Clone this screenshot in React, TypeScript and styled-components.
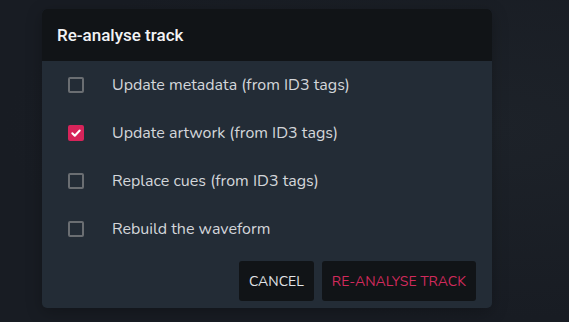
import { useState } from "react";
import styled, { createGlobalStyle } from "styled-components";

const GlobalStyle = createGlobalStyle`
  html, body {
    margin: 0;
    padding: 0;
    background: #1a1f26;
  }
  body {
    font-family: "Nunito", "Open Sans", sans-serif;
  }
`;

const options = [
  "Update metadata (from ID3 tags)",
  "Update artwork (from ID3 tags)",
  "Replace cues (from ID3 tags)",
  "Rebuild the waveform",
];

export default function App(): JSX.Element {
  const [checked, setChecked] = useState<boolean[]>([false, true, false, false]);

  const toggle = (index: number) => {
    setChecked((prev) => prev.map((value, i) => (i === index ? !value : value)));
  };

  return (
    <>
      <GlobalStyle />
      <Backdrop>
        <Dialog>
          <Header>Re-analyse track</Header>
          <Body>
            {options.map((label, index) => (
              <Row key={label} onClick={() => toggle(index)}>
                <Box checked={checked[index]}>
                  {checked[index] && (
                    <svg width="12" height="12" viewBox="0 0 12 12" fill="none">
                      <path
                        d="M2.3 6.2l2.5 2.5 4.9-5.2"
                        stroke="#ffffff"
                        strokeWidth="2"
                        strokeLinecap="round"
                        strokeLinejoin="round"
                      />
                    </svg>
                  )}
                </Box>
                <Label>{label}</Label>
              </Row>
            ))}
            <Actions>
              <ActionButton>CANCEL</ActionButton>
              <ActionButton primary>RE-ANALYSE TRACK</ActionButton>
            </Actions>
          </Body>
        </Dialog>
      </Backdrop>
    </>
  );
}

const Backdrop = styled.div`
  width: 569px;
  height: 322px;
  box-sizing: border-box;
  padding: 9px 0 0 42px;
  background: radial-gradient(ellipse at 85% 40%, #1d2229 0%, #181c23 70%);
  overflow: hidden;
`;

const Dialog = styled.div`
  width: 450px;
  border-radius: 5px;
  overflow: hidden;
  background: #232c36;
  box-shadow: 0 4px 16px rgba(0, 0, 0, 0.25);
`;

const Header = styled.div`
  height: 52px;
  display: flex;
  align-items: center;
  padding: 0 15px;
  background: #111417;
  color: #f2f3f5;
  font-family: "Roboto", "Liberation Sans", sans-serif;
  font-weight: 500;
  font-size: 17px;
`;

const Body = styled.div`
  display: flex;
  flex-direction: column;
  padding: 0 16px 7px 26px;
`;

const Row = styled.div`
  height: 48px;
  display: flex;
  align-items: center;
  cursor: pointer;
`;

const Box = styled.span<{ checked?: boolean }>`
  width: 16px;
  height: 16px;
  box-sizing: border-box;
  border-radius: 2px;
  border: 2px solid ${(props) => (props.checked ? "#d7245a" : "#6a6e72")};
  background: ${(props) => (props.checked ? "#d7245a" : "transparent")};
  display: flex;
  align-items: center;
  justify-content: center;
  margin-right: 28px;
`;

const Label = styled.span`
  color: #d3d6da;
  font-size: 16px;
`;

const Actions = styled.div`
  display: flex;
  justify-content: flex-end;
  gap: 8px;
  margin-top: 8px;
`;

const ActionButton = styled.button<{ primary?: boolean }>`
  height: 40px;
  padding: 0 10px;
  border: none;
  border-radius: 3px;
  background: #111417;
  color: ${(props) => (props.primary ? "#d12a5c" : "#e3e5e8")};
  font-family: "Nunito", "Open Sans", sans-serif;
  font-size: 14px;
  cursor: pointer;
`;
